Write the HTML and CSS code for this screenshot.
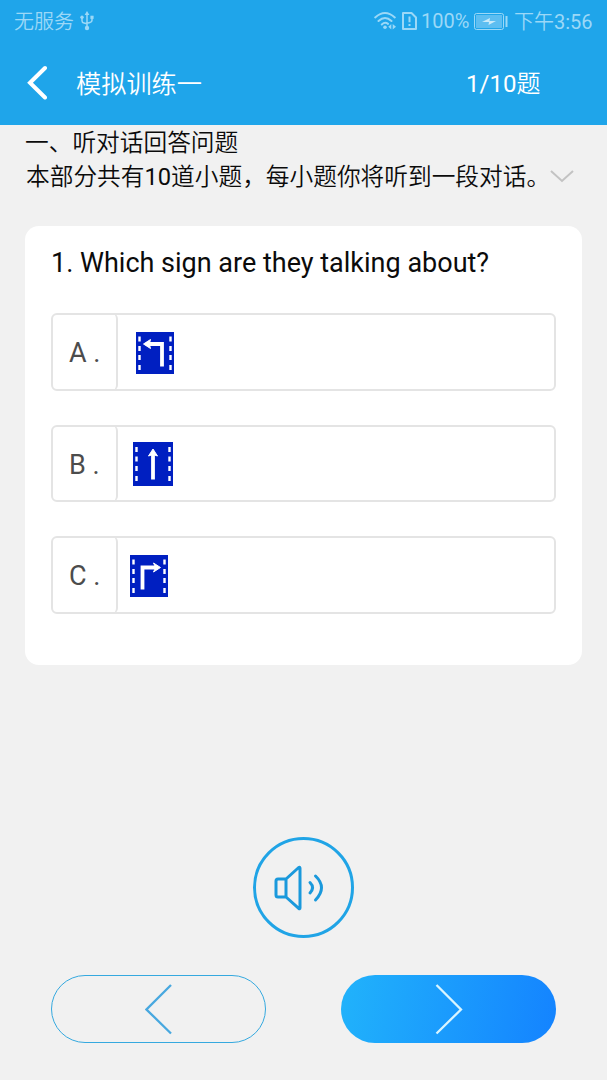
FILE: index.html
```html
<!DOCTYPE html>
<html lang="zh-CN">
<head>
<meta charset="utf-8">
<title>模拟训练一</title>
<link rel="stylesheet" href="styles.css">
</head>
<body>
<header class="header">
  <div class="status">
    <span class="carrier">无服务</span>
    <svg class="usb" width="14" height="20" viewBox="0 0 14 20" fill="none" stroke="currentColor" stroke-width="1.5"><path d="M7 3v13M2 6.500v3.200q0 2 2 2.400l3 .7M12 6.500v2.700q0 2-2 2.400l-3 .7"/><g fill="currentColor" stroke="none"><path d="M7 0l2.400 4H4.600z"/><circle cx="2" cy="6.300" r="1.700"/><path d="M10.400 4.700h3.200v3.200h-3.200z"/><circle cx="7" cy="17" r="2.200"/></g></svg>
    <svg class="wifi" width="23" height="20" viewBox="0 0 23 20" fill="none" stroke="currentColor" stroke-width="2" stroke-linecap="round"><path d="M1.200 6.400Q11 -2.500 20.800 6.400M4.500 10q6.500-6 13 0M7.800 13.500q3.200-3 6.200-.6"/><circle cx="11" cy="16.200" r="1.800" fill="currentColor" stroke="none"/><path d="M17.300 13v5.500l-3-2.700zM18.700 13v5.500l3.300-2.700z" fill="currentColor" stroke="none"/></svg>
    <svg class="sim" width="15" height="18" viewBox="0 0 15 18" fill="none" stroke="currentColor" stroke-width="2" stroke-linejoin="round"><path d="M1 1h8.500L14 5.500V17H1zM7.500 4.500v5.700M7.500 12v2"/></svg>
    <span class="percent">100%</span>
    <svg class="battery" width="34" height="17" viewBox="0 0 34 17"><rect x=".5" y=".5" width="29" height="16" rx="2" fill="none" stroke="currentColor"/><rect x="2" y="2" width="26" height="13" fill="currentColor" opacity=".5"/><path d="M8 9l8-4-.5 3H22l-7.500 4 .5-3z" fill="#c9eafa"/><path d="M32.500 3v11" stroke="currentColor" stroke-width="2"/></svg>
    <span class="clock">下午<span class="digits">3:56</span></span>
  </div>
  <nav class="nav">
    <svg class="back" width="21" height="36" viewBox="0 0 21 36" fill="none" stroke="#fff" stroke-width="4" stroke-linecap="round"><path d="M19 3L4 17.700 19 32.500"/></svg>
    <h1 class="title">模拟训练一</h1>
    <span class="progress"><span class="digits">1/10</span>题</span>
  </nav>
</header>
<main class="main">
  <section class="intro">
    <p class="intro-title">一、听对话回答问题</p>
    <div class="intro-row">
      <p class="intro-text">本部分共有<span class="digits">10</span>道小题，每小题你将听到一段对话。</p>
      <svg class="expand" width="24" height="14" viewBox="0 0 24 14" fill="none" stroke="#c3c3c3" stroke-width="2"><path d="M1 1l11 10L23 1"/></svg>
    </div>
  </section>
  <section class="card">
    <h2 class="question">1. Which sign are they talking about?</h2>
    <div class="options">
      <div class="option">
        <span class="letter">A .</span>
        <svg class="sign sign-a" width="38" height="42" viewBox="0 0 38 42" fill="none" stroke="#fff"><path fill="#001fc1" stroke="none" d="M0 0h38v42H0z"/><path stroke-width="2.400" d="M3.500 4.500v5m0 4.500v5m0 4v5m0 5v5M34.500 4.500v5m0 4.500v5m0 4v5m0 5v5"/><path stroke-width="3.800" d="M10 12h16v22.500"/><path d="M7.500 12l7-4.500-.8 3v3l.8 3z" fill="#fff"/></svg>
      </div>
      <div class="option">
        <span class="letter">B .</span>
        <svg class="sign sign-b" width="40" height="44" viewBox="0 0 40 44" fill="none" stroke="#fff"><path fill="#001fc1" stroke="none" d="M0 0h40v44H0z"/><path stroke-width="2.400" d="M3.500 5v5m0 4.500v5m0 4.500v5m0 5v5M36.500 5v5m0 4.500v5m0 4.500v5m0 5v5"/><path stroke-width="3.800" d="M20 10v27.500"/><path d="M20 7l4.500 7-3-1h-3l-3 1z" fill="#fff"/></svg>
      </div>
      <div class="option">
        <span class="letter">C .</span>
        <svg class="sign sign-c" width="38" height="42" viewBox="0 0 38 42" fill="none" stroke="#fff"><path fill="#001fc1" stroke="none" d="M0 0h38v42H0z"/><path stroke-width="2.400" d="M3.500 4.500v5m0 4.500v5m0 4v5m0 5v5M34.500 4.500v5m0 4.500v5m0 4v5m0 5v5"/><path stroke-width="3.800" d="M12.500 34.500V12.500H27"/><path d="M30.500 12.500l-7-4.500 1.500 3v3l-1.500 3z" fill="#fff"/></svg>
      </div>
    </div>
  </section>
  <div class="play">
    <svg width="50" height="46" viewBox="0 0 50 46" fill="none" stroke="#1a99dc" stroke-width="3" stroke-linecap="round" stroke-linejoin="round"><path d="M12 14L24.700 2.500q1.300-.8 1.300.8v39.400q0 1.500-1.300.7L12 32zH4q-2 0-2 2v14q0 2 2 2h8"/><path d="M36 17.500q5 5 0 10.500M41.500 11q12 11.500 0 24"/></svg>
  </div>
  <div class="controls">
    <div class="button prev"><svg width="28" height="52" viewBox="0 0 28 52" fill="none" stroke="#48a8df" stroke-width="2.300"><path d="M26 2L1.500 26.500 26 50.500"/></svg></div>
    <div class="button next"><svg width="28" height="52" viewBox="0 0 28 52" fill="none" stroke="#d9f5ff" stroke-width="2.300"><path d="M1.500 2L26 26.500 1.500 50.500"/></svg></div>
  </div>
</main>
</body>
</html>
```
FILE: styles.css
```css
* { box-sizing: border-box; }
body {
  margin: 0;
  width: 607px;
  height: 1080px;
  overflow: hidden;
  background: #f1f1f1;
  color: #0b0b0b;
  font-family: Roboto, "Noto Sans CJK SC", sans-serif;
}
h1, h2, p { margin: 0; font-weight: 400; white-space: nowrap; }
svg { display: block; flex: none; }
.digits { font-weight: 400; }
.header { height: 125px; background: #1fa5ea; color: #fff; }
.status {
  display: flex;
  align-items: center;
  height: 42px;
  padding: 1px 14px 0;
  color: #9bd8f7;
  font-size: 20px;
  line-height: 41px;
  white-space: nowrap;
}
.carrier { width: 66px; font-weight: 350; padding-top: 1px; }
.usb { margin-top: -1px; }
.wifi { margin-left: auto; margin-top: -2px; }
.sim { margin-left: 5px; margin-top: -1px; }
.percent { width: 48px; margin-left: 4px; }
.battery { margin-left: 5px; margin-top: -1px; }
.clock { width: 79px; margin-left: 6px; font-weight: 350; padding-top: 1px; }
.nav { display: flex; align-items: center; height: 82px; padding-left: 26px; }
.title { width: 390px; margin-left: 29px; font-size: 25.2px; font-weight: 350; line-height: 36px; margin-top: 3px; }
.progress { font-size: 24px; font-weight: 350; margin-top: -3px; }
.intro { height: 101px; padding: 1px 0 0 25px; font-size: 23.7px; }
.intro p { font-weight: 350; }
.intro-title { height: 34px; line-height: 34px; }
.intro-row { display: flex; align-items: center; height: 34px; padding-left: 1px; }
.intro-text { width: 523px; line-height: 34px; }
.expand { margin-left: 1px; }
.card { width: 557px; height: 439px; margin-left: 25px; padding: 20px 26px; border-radius: 14px; background: #fff; }
.question { height: 34px; line-height: 35px; font-size: 27px; }
.options { display: flex; flex-direction: column; gap: 34px; margin-top: 33px; }
.option { display: flex; align-items: center; width: 505px; height: 77.5px; border: 2px solid #e4e4e4; border-radius: 6px; }
.letter {
  width: 67px;
  height: 77.5px;
  margin-left: -2px;
  padding: 2px 0 0 18px;
  border-right: 2px solid #e4e4e4;
  border-radius: 6px;
  color: #4c4c4c;
  font-size: 27px;
  line-height: 77px;
}
.sign { margin-top: 2px; }
.sign-a { margin-left: 18px; }
.sign-b { margin-left: 15px; }
.sign-c { margin-left: 12px; }
.play {
  display: flex;
  align-items: center;
  width: 101px;
  height: 101px;
  margin: 172px 0 0 253px;
  padding-left: 18px;
  border: 3px solid #20a4e6;
  border-radius: 50%;
}
.controls { display: flex; justify-content: space-between; padding: 37px 51px 0; }
.button { display: flex; justify-content: center; align-items: center; width: 215px; height: 68px; border-radius: 34px; }
.prev { border: 1.5px solid #35a9df; }
.next { background: linear-gradient(100deg, #21b3fb, #1483ff); }
```
